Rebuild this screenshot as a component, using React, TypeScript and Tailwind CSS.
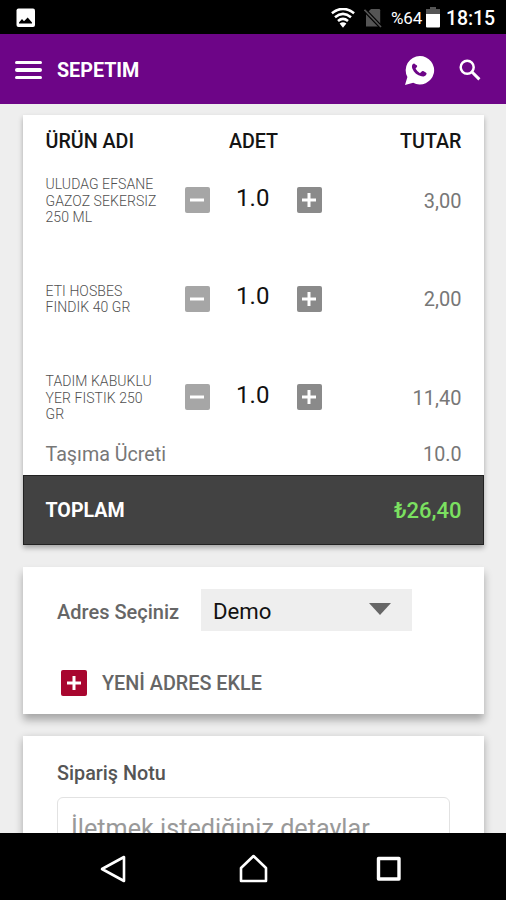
interface CartItem {
  name: string[];
  quantity: string;
  price: string;
}

const CART_ITEMS: CartItem[] = [
  { name: ["ULUDAG EFSANE", "GAZOZ SEKERSIZ", "250 ML"], quantity: "1.0", price: "3,00" },
  { name: ["ETI HOSBES", "FINDIK 40 GR"], quantity: "1.0", price: "2,00" },
  { name: ["TADIM KABUKLU", "YER FISTIK 250", "GR"], quantity: "1.0", price: "11,40" },
];

function StatusBar() {
  return (
    <div className="flex h-[34px] shrink-0 items-center bg-black pl-4 pr-[11px] pt-px text-white">
      <svg width="20" height="20" viewBox="0 0 20 20" className="mr-auto">
        <rect x="0.5" y="0.5" width="18.5" height="18.5" rx="2" fill="#fff" />
        <path d="M3 15.5v-1l3-3.5 2 2.3 3.7-3.8 4.3 5v1z" fill="#000" />
      </svg>
      {/* Wifi */}
      <svg width="24" height="20" viewBox="0 0 24 20" className="mr-[9px]" fill="none" stroke="#fff" strokeWidth="2.6">
        <path d="M0.9 5.2Q12 -3.4 23.1 5.2" />
        <path d="M4 9.2Q12 2.7 20 9.2" />
        <path d="M7 13Q12 8.8 17 13" />
        <path d="M8.6 15.6Q12 13 15.4 15.6L12 19.8z" fill="#fff" stroke="none" />
      </svg>
      {/* No SIM */}
      <svg width="18" height="20" viewBox="0 0 18 20" className="mr-[9px]">
        <path d="M7 1h8a1.2 1.2 0 0 1 1.2 1.2V18.5H2V6z" fill="#555" />
        <path d="M0.5 1.8L17 19" stroke="#000" strokeWidth="4" />
        <path d="M0.5 1.8L17 19" stroke="#555" strokeWidth="1.7" />
      </svg>
      <span className="mr-[4px] text-[17px] leading-5 tracking-[-0.2px]">%64</span>
      <svg width="14" height="21" viewBox="0 0 14 21" className="mr-[6px]">
        <path d="M4 0h6v2h4v6H0V2h4z" fill="#555" />
        <path d="M0 7h14v12.5a1 1 0 0 1-1 1H1a1 1 0 0 1-1-1z" fill="#fff" />
      </svg>
      <span className="pt-0.5 text-[19.5px] font-medium leading-5 tracking-[-0.1px]">18:15</span>
    </div>
  );
}

function Header() {
  return (
    <header className="flex h-[70px] shrink-0 items-center bg-[#6d0587] pl-[15px] pr-[25px] pt-0.5 text-white">
      <div className="mr-[15px] flex w-[27px] flex-col gap-1">
        <span className="h-[3.5px] rounded-sm bg-white" />
        <span className="h-[3.5px] rounded-sm bg-white" />
        <span className="h-[3.5px] rounded-sm bg-white" />
      </div>
      <h1 className="mr-auto pt-0.5 text-[19.7px] font-bold leading-6">SEPETIM</h1>
      <svg width="31" height="31" viewBox="0 0 31 31" className="mr-[24px]">
        <path d="M15.8 1a14.2 14.2 0 1 1-6.6 26.7L1 30l2.4-8A14.2 14.2 0 0 1 15.8 1z" fill="#fff" />
        <path
          d="M10.7 8.9c-.5-.6-1.2-.4-1.8.2-1.1 1.3-1.2 2.8-.5 4.6 1.6 4 4.9 6.6 9.1 7.6 1.9.4 3.8-.2 4.8-1.9.5-.9.3-1.4-.5-1.9l-2.6-1.4c-.7-.4-1.1-.2-1.5.3l-1 1.2c-.4.4-.8.4-1.3.1a9 9 0 0 1-3.6-3.6c-.3-.5-.2-.8.2-1.2l.9-1c.4-.5.3-.8.1-1.3z"
          fill="#6d0587"
        />
      </svg>
      <svg width="22" height="22" viewBox="0 0 22 22" fill="none" stroke="#fff" strokeWidth="2.5">
        <circle cx="8.2" cy="8.2" r="6.5" />
        <path d="M13 13l7.4 7.4" strokeWidth="3" />
      </svg>
    </header>
  );
}

interface SquareButtonProps {
  sign: "plus" | "minus";
  className: string;
}

function SquareButton({ sign, className }: SquareButtonProps) {
  return (
    <button className={`flex h-[26px] w-[25.5px] shrink-0 items-center justify-center rounded-[2px] text-white ${className}`}>
      <svg width="14" height="14" viewBox="0 0 14 14" stroke="currentColor" strokeWidth="3">
        <path d="M0 7h14" />
        {sign === "plus" && <path d="M7 0v14" />}
      </svg>
    </button>
  );
}

function CartRow({ item }: { item: CartItem }) {
  return (
    <div className="flex h-[98.5px] items-center">
      <div className="w-[139px] shrink-0 pt-px text-[14px] font-light leading-[16.5px] tracking-[0.07px] text-[#505050]">
        {item.name.map((line) => (
          <p key={line}>{line}</p>
        ))}
      </div>
      <SquareButton sign="minus" className="bg-[#a6a6a6]" />
      <span className="w-[86.5px] pb-[5px] pr-px text-center text-[24px] leading-7 text-[#111]">{item.quantity}</span>
      <SquareButton sign="plus" className="bg-[#8a8a8a]" />
      <span className="ml-auto pt-px text-[20px] text-[#777]">{item.price}</span>
    </div>
  );
}

function CartCard() {
  return (
    <section className="h-[430px] shrink-0 bg-white shadow-[0_3px_5px_rgba(0,0,0,0.3)]">
      <div className="h-[360px] px-[22.5px] pt-[17px]">
        <div className="-mb-px grid grid-cols-3 text-[19.7px] font-medium leading-5 text-[#151515]">
          <span>ÜRÜN ADI</span>
          <span className="text-center">ADET</span>
          <span className="text-right">TUTAR</span>
        </div>
        {CART_ITEMS.map((item) => (
          <CartRow key={item.name[0]} item={item} />
        ))}
        <div className="flex justify-between text-[19.7px] leading-[15px] text-[#777]">
          <span>Taşıma Ücreti</span>
          <span>10.0</span>
        </div>
      </div>
      <div className="flex h-[70px] items-center justify-between border border-[#222] bg-[#424242] px-[21.5px]">
        <span className="pt-0.5 text-[19.6px] font-bold text-white">TOPLAM</span>
        <span className="text-[22px] font-medium text-[#7be060]">₺26,40</span>
      </div>
    </section>
  );
}

function AddressCard() {
  return (
    <section className="mt-[22px] h-[147px] shrink-0 bg-white px-[34px] pt-[22px] shadow-[0_6px_8px_rgba(0,0,0,0.3)]">
      <div className="flex items-center">
        <span className="w-[144px] pt-1 text-[20px] font-medium text-[#666]">Adres Seçiniz</span>
        <div className="flex h-[42px] w-[211px] items-center justify-between bg-[#eee] pl-3 pr-[21px] text-[#111]">
          <span className="pt-1 text-[22.2px]">Demo</span>
          <svg width="22" height="12" viewBox="0 0 22 12" className="mb-0.5">
            <path d="M0 0h22L11 12z" fill="#666" />
          </svg>
        </div>
      </div>
      <div className="mt-[38px] flex items-center pl-1">
        <SquareButton sign="plus" className="bg-[#a8062f]" />
        <span className="ml-[15.5px] pt-0.5 text-[19.8px] font-medium leading-[26px] text-[#666]">YENİ ADRES EKLE</span>
      </div>
    </section>
  );
}

function NoteCard() {
  return (
    <section className="mt-[22px] h-[240px] shrink-0 bg-white px-[34px] pt-[26px] shadow-[0_3px_8px_rgba(0,0,0,0.3)]">
      <p className="text-[19.8px] font-medium leading-6 text-[#555]">Sipariş Notu</p>
      <div className="mt-[11px] h-[150px] rounded-md border border-[#e2e2e2] px-[13px] pt-[15px] text-[25.2px] leading-8 text-[#999]">
        İletmek istediğiniz detaylar
      </div>
    </section>
  );
}

function NavigationBar() {
  return (
    <nav className="flex h-[67px] shrink-0 items-center bg-black pl-[100px] pt-1">
      <svg width="27" height="30" viewBox="0 0 27 30" fill="none" stroke="#fff" strokeWidth="2.6" strokeLinejoin="round">
        <path d="M2 15L24 3v24z" />
      </svg>
      <svg width="30" height="30" viewBox="0 0 30 30" className="ml-[111px]" fill="none" stroke="#fff" strokeWidth="2.6" strokeLinejoin="round">
        <path d="M3 14L15.5 2 28 14v13H3z" />
      </svg>
      <svg width="26" height="26" viewBox="0 0 26 26" className="ml-[108px]" fill="none" stroke="#fff" strokeWidth="3.4" strokeLinejoin="round">
        <path d="M2.5 2.5h20.5v20.5H2.5z" />
      </svg>
    </nav>
  );
}

export default function App() {
  return (
    <div className="flex h-[900px] w-[506px] flex-col overflow-hidden bg-[#eee] font-['Roboto',sans-serif]">
      <StatusBar />
      <Header />
      <main className="flex h-[729px] flex-col overflow-hidden pl-[23px] pr-[22px] pt-[11px]">
        <CartCard />
        <AddressCard />
        <NoteCard />
      </main>
      <NavigationBar />
    </div>
  );
}
